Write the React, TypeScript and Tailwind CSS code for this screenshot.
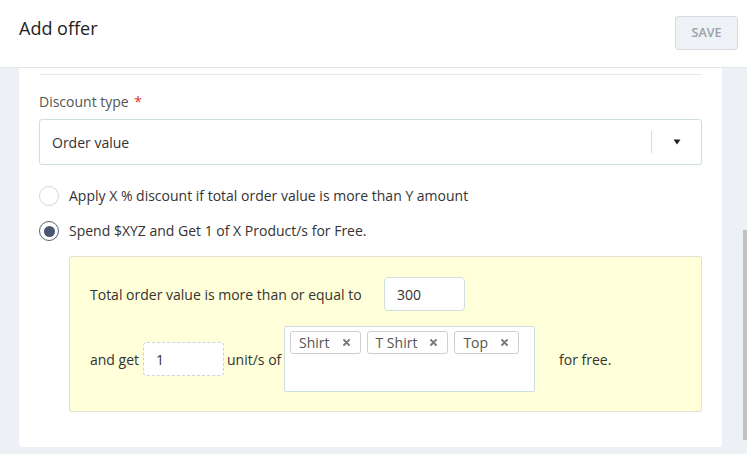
import React from "react";

function Tag({ label }: { label: string }) {
  return (
    <div className="flex h-[23px] items-center rounded-[3px] border border-[#cfcfcf] bg-white pl-[8px] pr-[10px] text-[14px] text-[#555]">
      <span>{label}</span>
      <svg className="ml-[13px]" width="7" height="7" viewBox="0 0 7 7">
        <path d="M1 1 L6 6 M6 1 L1 6" stroke="#777" strokeWidth="1.8" strokeLinecap="round" />
      </svg>
    </div>
  );
}

export default function App() {
  return (
    <div className="relative h-[454px] w-[747px] overflow-hidden bg-[#edf0f4] font-['Open_Sans',sans-serif] text-[#333]">
      <header className="relative z-10 flex h-[68px] items-start justify-between border-b border-[#e2e5e9] bg-white pl-[19px] pr-[9px]">
        <h1 className="mt-[15px] text-[18px] leading-[26px] text-[#222]">Add offer</h1>
        <button className="mt-[16px] flex h-[34px] w-[63px] items-center justify-center rounded-[3px] border border-[#d6dbe0] bg-[#eef1f5] text-[12.5px] font-semibold text-[#9aa0a6]">
          SAVE
        </button>
      </header>
      <div className="pl-[19px] pr-[25px]">
        <div className="rounded-b-[4px] bg-white px-[20px] pb-[35px] pt-[6px]">
          <div className="border-t border-[#e6e8eb]" />
          <div className="mt-[17px] text-[14px] leading-[20px] text-[#555]">
            Discount type <span className="ml-[2px] text-[#d33]">*</span>
          </div>
          <div className="mt-[7px] flex h-[46px] items-center rounded-[3px] border border-[#cfdede] pl-[12px]">
            <span className="flex-1 text-[14px] text-[#333]">Order value</span>
            <div className="h-[22px] border-l border-[#d5dede]" />
            <div className="flex w-[49px] justify-center">
              <svg width="8" height="6" viewBox="0 0 8 6">
                <path d="M0.5 0.5 H7.5 L4 5.5 Z" fill="#222" />
              </svg>
            </div>
          </div>
          <div className="mt-[21px] flex items-center">
            <div className="h-[20px] w-[20px] rounded-full border border-[#d5d5d0] bg-white" />
            <span className="ml-[10px] text-[14px] leading-[20px]">
              Apply X % discount if total order value is more than Y amount
            </span>
          </div>
          <div className="mt-[15px] flex items-center">
            <div className="flex h-[20px] w-[20px] items-center justify-center rounded-full border-[1.5px] border-[#566077] bg-white">
              <div className="h-[11px] w-[11px] rounded-full bg-[#4a5570]" />
            </div>
            <span className="ml-[10px] text-[14px] leading-[20px]">
              Spend $XYZ and Get 1 of X Product/s for Free.
            </span>
          </div>
          <div className="ml-[30px] mt-[15px] h-[156px] rounded-[2px] border border-[#e0e3d2] bg-[#ffffd9] pl-[20px] pt-[20px] text-[14px] text-[#333]">
            <div className="flex items-center">
              <span className="w-[294px]">Total order value is more than or equal to</span>
              <div className="flex h-[34px] w-[81px] items-center rounded-[4px] border border-[#cfdede] bg-white pl-[12px]">
                300
              </div>
            </div>
            <div className="mt-[15px] flex items-center">
              <span className="w-[53px]">and get</span>
              <div className="flex h-[34px] w-[81px] items-center rounded-[4px] border border-dashed border-[#cfd3d3] bg-white pl-[12px]">
                1
              </div>
              <span className="ml-[3px] w-[57px]">unit/s of</span>
              <div className="h-[66px] w-[251px] rounded-[2px] border border-[#cfdede] bg-white pl-[5px] pt-[4px]">
                <div className="flex gap-[6px]">
                  <Tag label="Shirt" />
                  <Tag label="T Shirt" />
                  <Tag label="Top" />
                </div>
              </div>
              <span className="ml-[24px]">for free.</span>
            </div>
          </div>
        </div>
      </div>
      <div className="absolute right-0 top-[230px] h-[210px] w-[4px] bg-[#c1c1c1]" />
    </div>
  );
}
